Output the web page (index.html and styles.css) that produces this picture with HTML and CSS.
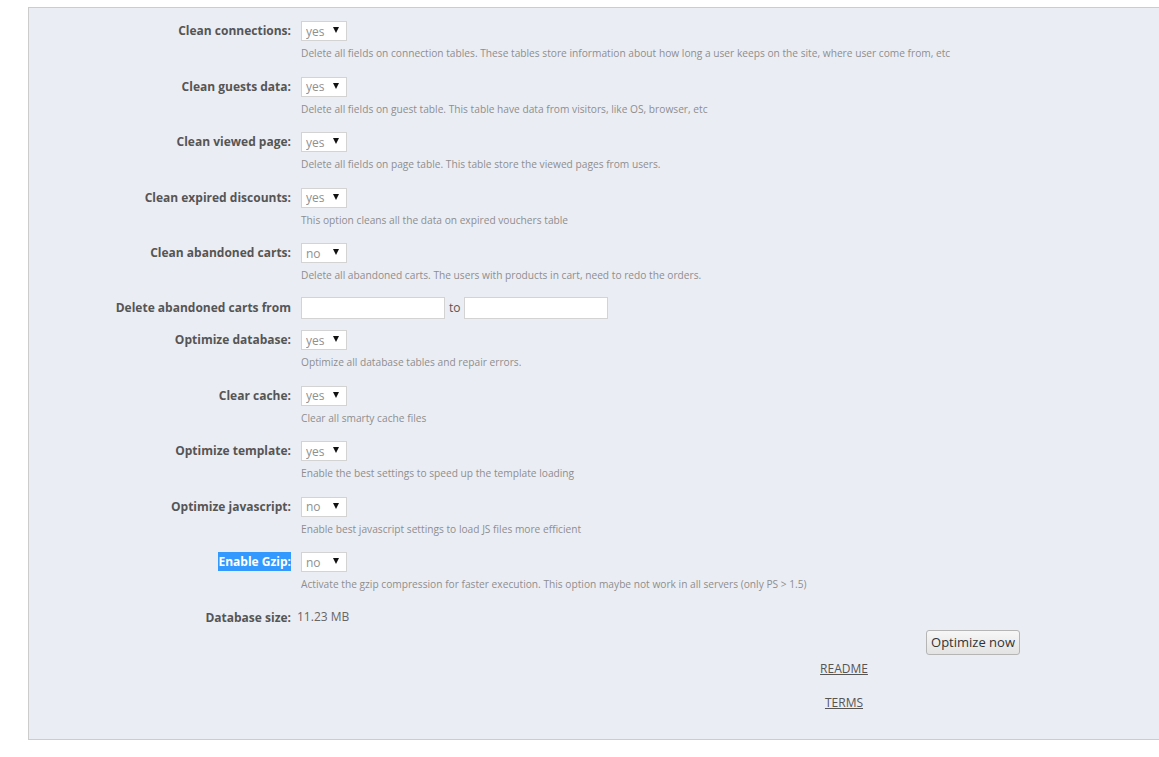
FILE: index.html
```html
<!DOCTYPE html>
<html lang="en">
<head>
    <meta charset="UTF-8">
    <title>Database Cleaner</title>
    <link rel="stylesheet" href="styles.css">
</head>
<body>
    <div class="panel">
        <div class="row">
            <label>Clean connections:</label>
            <div class="field">
                <span class="select"><select><option>yes</option><option>no</option></select></span>
                <p class="help">Delete all fields on connection tables. These tables store information about how long a user keeps on the site, where user come from, etc</p>
            </div>
        </div>
        <div class="row">
            <label>Clean guests data:</label>
            <div class="field">
                <span class="select"><select><option>yes</option><option>no</option></select></span>
                <p class="help">Delete all fields on guest table. This table have data from visitors, like OS, browser, etc</p>
            </div>
        </div>
        <div class="row">
            <label>Clean viewed page:</label>
            <div class="field">
                <span class="select"><select><option>yes</option><option>no</option></select></span>
                <p class="help">Delete all fields on page table. This table store the viewed pages from users.</p>
            </div>
        </div>
        <div class="row">
            <label>Clean expired discounts:</label>
            <div class="field">
                <span class="select"><select><option>yes</option><option>no</option></select></span>
                <p class="help">This option cleans all the data on expired vouchers table</p>
            </div>
        </div>
        <div class="row">
            <label>Clean abandoned carts:</label>
            <div class="field">
                <span class="select"><select><option>no</option><option>yes</option></select></span>
                <p class="help">Delete all abandoned carts. The users with products in cart, need to redo the orders.</p>
            </div>
        </div>
        <div class="row row-dates">
            <label>Delete abandoned carts from</label>
            <div class="field dates">
                <input type="text" class="date">
                <span class="to">to</span>
                <input type="text" class="date">
            </div>
        </div>
        <div class="row">
            <label>Optimize database:</label>
            <div class="field">
                <span class="select"><select><option>yes</option><option>no</option></select></span>
                <p class="help">Optimize all database tables and repair errors.</p>
            </div>
        </div>
        <div class="row">
            <label>Clear cache:</label>
            <div class="field">
                <span class="select"><select><option>yes</option><option>no</option></select></span>
                <p class="help">Clear all smarty cache files</p>
            </div>
        </div>
        <div class="row">
            <label>Optimize template:</label>
            <div class="field">
                <span class="select"><select><option>yes</option><option>no</option></select></span>
                <p class="help">Enable the best settings to speed up the template loading</p>
            </div>
        </div>
        <div class="row">
            <label>Optimize javascript:</label>
            <div class="field">
                <span class="select"><select><option>no</option><option>yes</option></select></span>
                <p class="help">Enable best javascript settings to load JS files more efficient</p>
            </div>
        </div>
        <div class="row row-gzip">
            <label><span class="selected">Enable Gzip:</span></label>
            <div class="field">
                <span class="select"><select><option>no</option><option>yes</option></select></span>
                <p class="help">Activate the gzip compression for faster execution. This option maybe not work in all servers (only PS &gt; 1.5)</p>
            </div>
        </div>
        <div class="row row-size">
            <label>Database size:</label>
            <div class="size">11.23 MB</div>
        </div>
        <div class="actions">
            <button type="button" class="btn">Optimize now</button>
        </div>
        <div class="links">
            <a href="#">README</a>
            <a href="#">TERMS</a>
        </div>
    </div>
</body>
</html>
```

FILE: styles.css
```css
body { margin: 0; background: #fff; font-family: "Open Sans", "DejaVu Sans", sans-serif; color: #555; }
.panel { margin: 7px 0 0 28px; width: calc(100% - 29px); height: 718px; padding-top: 13px; background: #ebedf4; border: 1px solid #ccc; border-right: none; }
.row { display: grid; grid-template-columns: 262px auto; column-gap: 10px; margin-bottom: 16.5px; }
.row label { text-align: right; font-size: 12px; font-weight: bold; color: #555; line-height: 20px; }
.selected { background: #3399ff; color: #fff; padding: 1px 0 1px; }
.field { display: flex; flex-direction: column; align-items: flex-start; }
.select { position: relative; display: block; height: 20px; }
.select select { display: block; appearance: none; -webkit-appearance: none; width: 46px; height: 20px; border: 1px solid #d3d3d3; background: #fff; font-family: "Open Sans", sans-serif; font-size: 12px; color: #909090; padding: 0 0 0 4px; margin: 0; border-radius: 0; outline: none; }
.select::after { content: ""; position: absolute; right: 8px; top: 6px; border-left: 3.5px solid transparent; border-right: 3.5px solid transparent; border-top: 6px solid #111; pointer-events: none; }
.help { margin: 5px 0 0; font-size: 10.2px; line-height: 14px; color: #8e8e8e; white-space: nowrap; }
.row-dates { margin-top: -2px; margin-bottom: 11.5px; }
.row-dates label { line-height: 22px; }
.row-gzip { margin-top: 3.5px; }
.dates { flex-direction: row; align-items: center; }
.date { width: 144px; height: 22px; box-sizing: border-box; border: 1px solid #d3d3d3; background: #fff; margin: 0; padding: 0 4px; }
.to { font-size: 12px; color: #555; margin: 0 3px 0 4px; }
.row-size { margin-top: 8.5px; margin-bottom: 0; column-gap: 6px; }
.size { font-size: 12px; color: #666; line-height: 18px; }
.actions { width: 991px; text-align: right; margin-top: 2px; }
.btn { display: inline-block; font-family: "Open Sans", sans-serif; font-size: 13px; color: #333; height: 25px; width: 94px; padding: 0; background: linear-gradient(#f7f7f7, #e3e3e3); border: 1px solid #b5b5b5; border-radius: 3px; vertical-align: top; }
.links { width: 100px; margin-left: 765px; display: flex; flex-direction: column; align-items: center; gap: 17px; margin-top: 5px; }
.links a { font-size: 12px; color: #555; line-height: 17px; }
```
